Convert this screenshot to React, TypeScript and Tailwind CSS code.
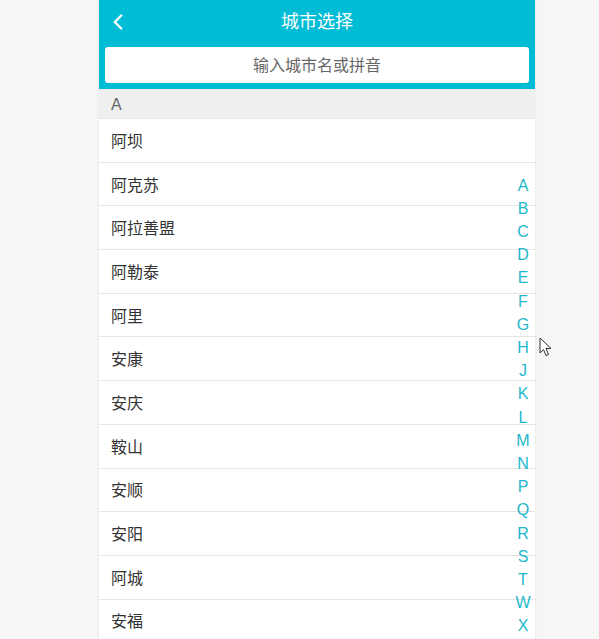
import { ChevronLeft } from "lucide-react";

const cities = [
  "阿坝",
  "阿克苏",
  "阿拉善盟",
  "阿勒泰",
  "阿里",
  "安康",
  "安庆",
  "鞍山",
  "安顺",
  "安阳",
  "阿城",
  "安福",
];

const letters = "ABCDEFGHJKLMNPQRSTWX".split("");

export default function App() {
  return (
    <div
      className="h-[639px] w-[599px] overflow-hidden bg-[#f6f6f6]"
      style={{ fontFamily: '"Liberation Sans", "Noto Sans CJK SC", sans-serif' }}
    >
      <div className="relative ml-[99px] h-full w-[436px] bg-white shadow-[0_0_3px_rgba(0,0,0,0.08)]">
        {/* header */}
        <div className="relative flex h-[44px] items-center justify-center bg-[#00bcd4]">
          <ChevronLeft className="absolute left-[6px] top-[9px] h-[26px] w-[26px] text-white" strokeWidth={2.2} />
          <span className="text-[18px] text-white">城市选择</span>
        </div>

        {/* search */}
        <div className="bg-[#00bcd4] px-[6px] pb-[6px] pt-[3px]">
          <div className="flex h-[36px] items-center justify-center rounded-[3px] bg-white pt-[2px] text-[16px] text-[#666]">
            输入城市名或拼音
          </div>
        </div>

        {/* list */}
        <div className="flex h-[30px] items-center border-b border-[#e6e6e6] bg-[#efefef] px-[12px] pt-[2px] text-[16px] text-[#666]">
          A
        </div>
        {cities.map((c) => (
          <div
            key={c}
            className="flex h-[43.7px] items-center border-b border-[#e5e5e5] px-[12px] pt-[3px] text-[16px] text-[#333]"
          >
            {c}
          </div>
        ))}

        {/* index bar */}
        <div className="absolute right-0 top-[173.5px] flex w-[24px] flex-col items-center">
          {letters.map((l) => (
            <span key={l} className="text-[16px] leading-[23.2px] text-[#22b8cc]">
              {l}
            </span>
          ))}
        </div>
      </div>

      {/* mouse cursor */}
      <svg className="absolute left-[539px] top-[337px]" width="13" height="20" viewBox="0 0 13 20">
        <path d="M1 1 L1 16 L4.5 12.5 L7 18.5 L9.5 17.5 L7 11.5 L12 11.5 Z" fill="#fff" stroke="#333" strokeWidth="1" />
      </svg>
    </div>
  );
}
